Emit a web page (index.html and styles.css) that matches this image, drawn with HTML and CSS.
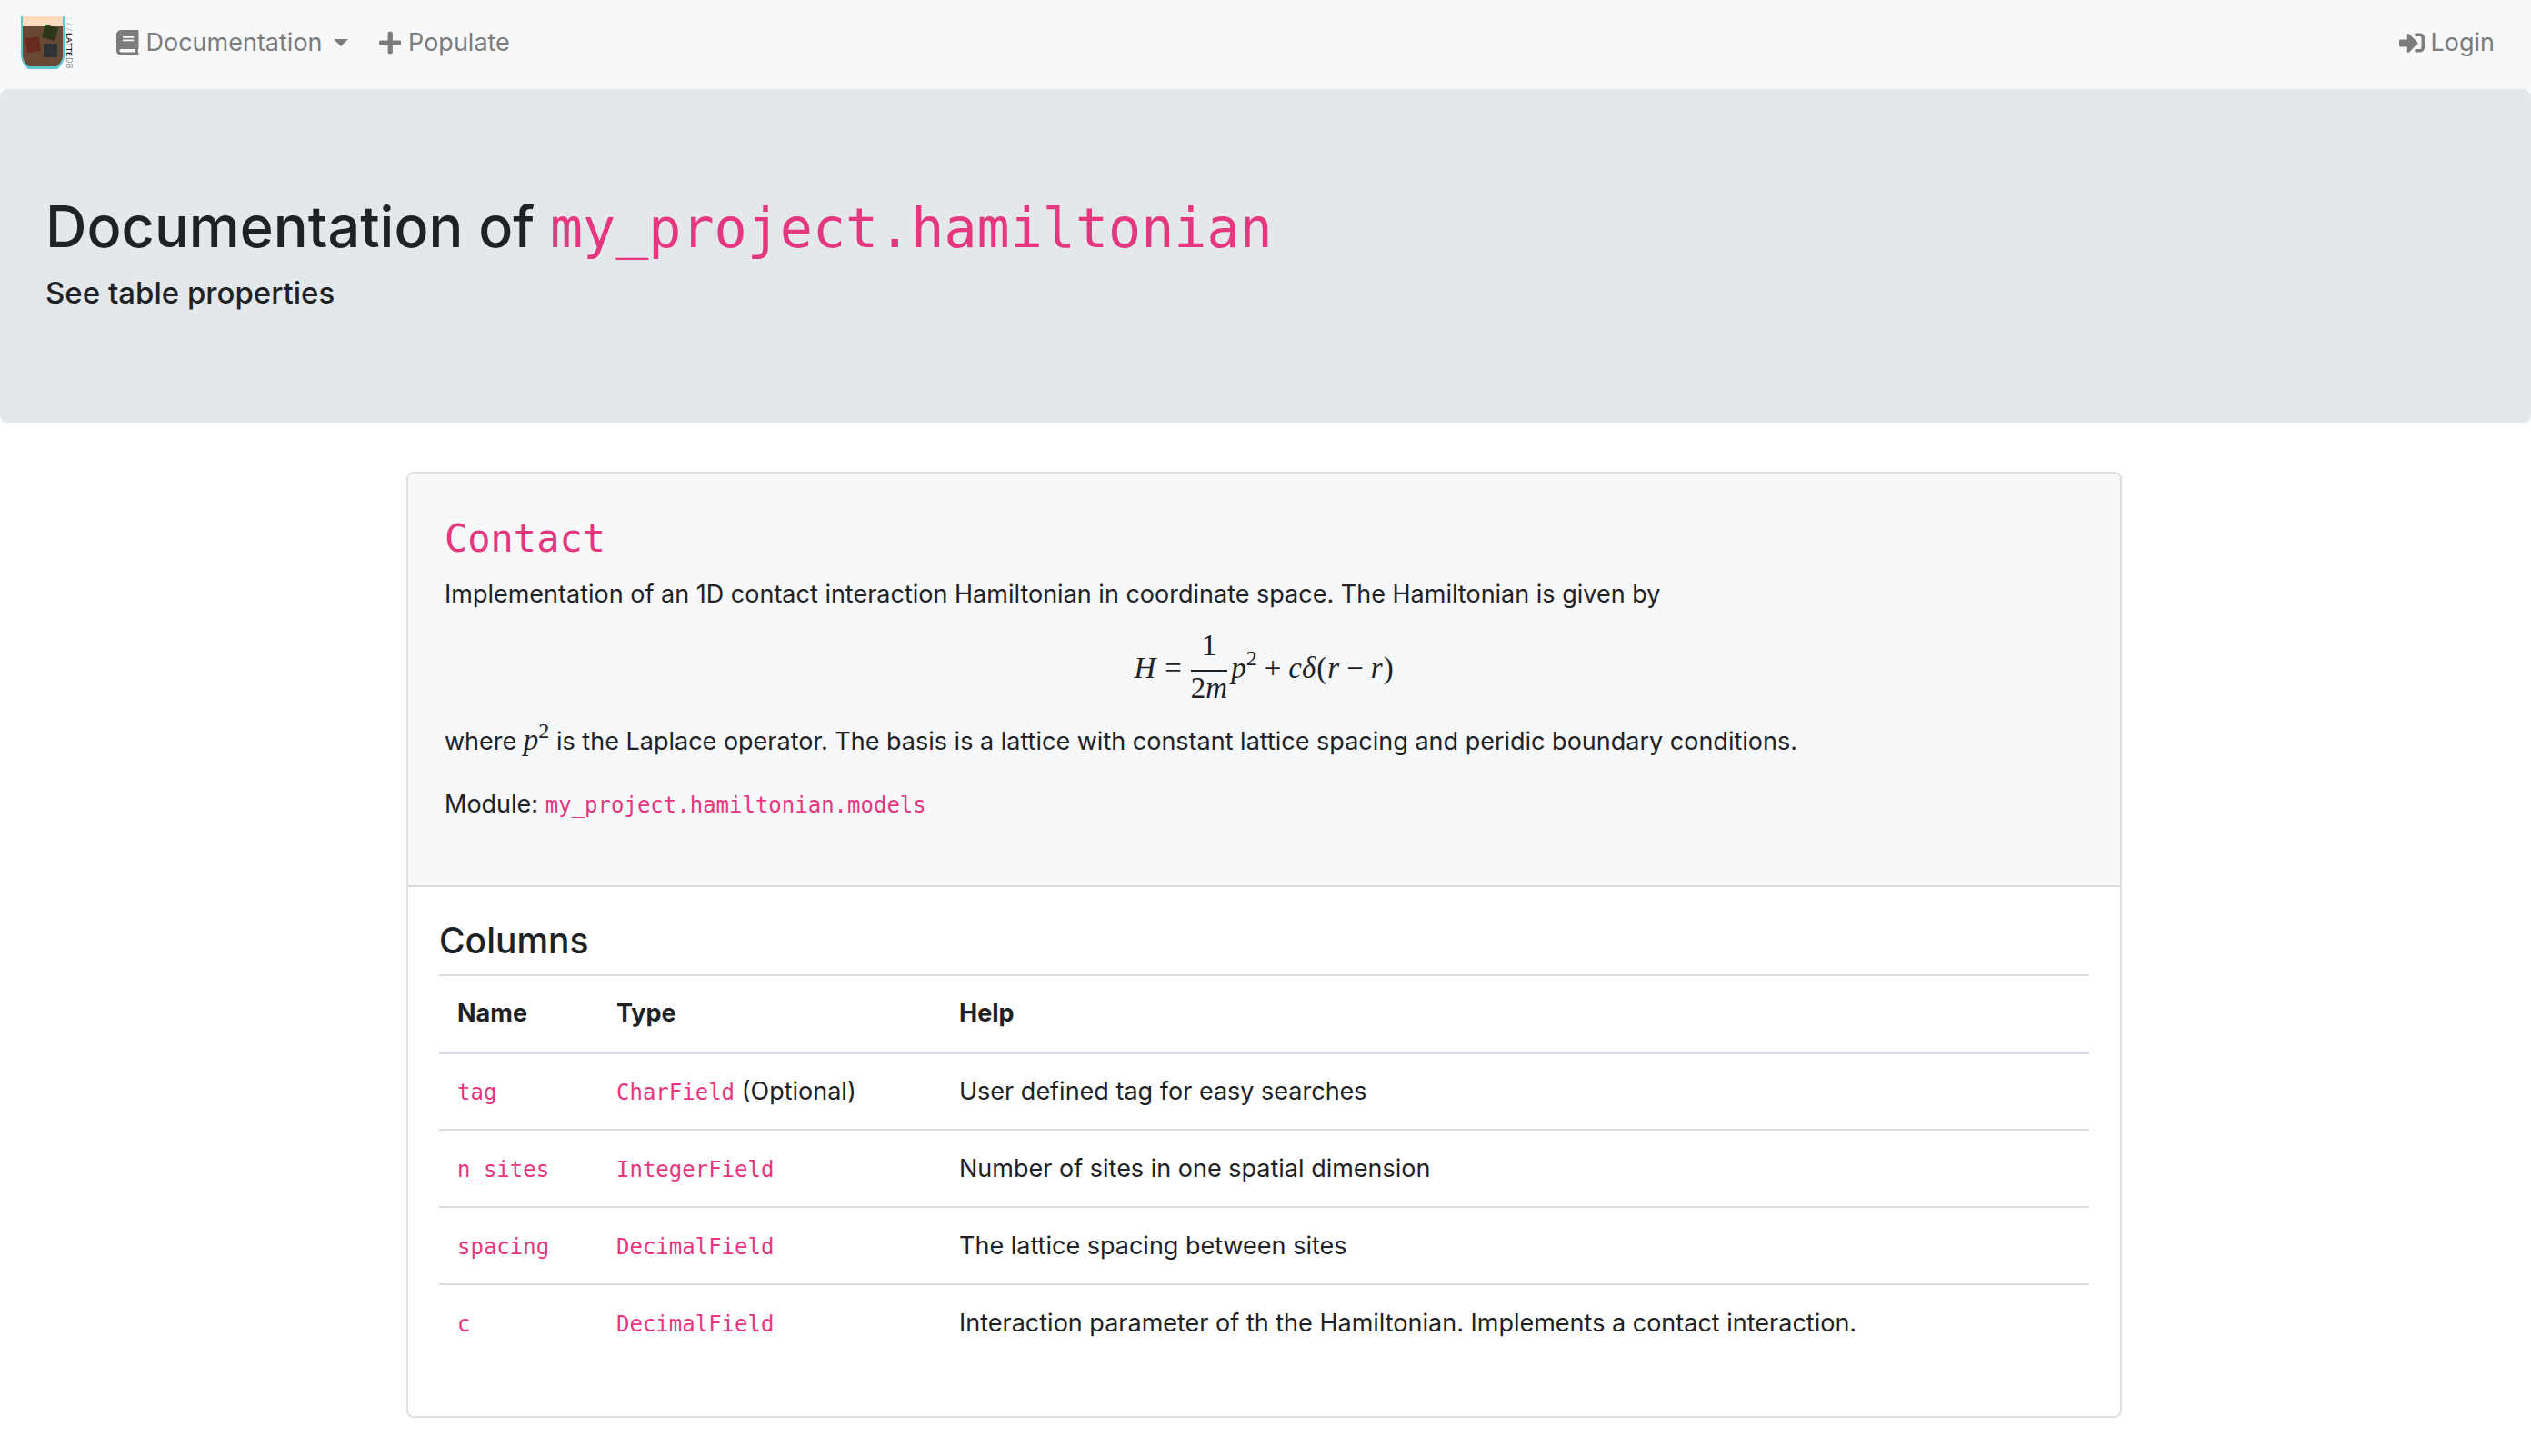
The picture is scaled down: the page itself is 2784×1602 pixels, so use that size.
FILE: index.html
```html
<!DOCTYPE html>
<html lang="en">
<head>
  <meta charset="utf-8">
  <meta name="viewport" content="width=device-width, initial-scale=1">
  <title>Documentation of my_project.hamiltonian</title>
  <link rel="stylesheet" href="styles.css">
</head>
<body>
  <nav class="navbar">
    <a class="brand" href="#" aria-label="LatteDB home">
      <svg class="brand-logo" viewBox="0 0 64 60" aria-hidden="true">
        <path fill="#ffdcc0" d="M1 1h46v12H1z"/>
        <path fill="#674936" d="M1 12h46v34q0 7-8 11H9q-8-4-8-11z"/>
        <path fill="#5cc5d0" d="M0 1h2v44q1 7 7 11h30q6-4 7-11V1h2v44q-1 8-8 14H8Q1 53 0 45z"/>
        <path fill="#2c3719" d="M27 10l14 4-4 14-14-4z"/>
        <path fill="#12a04c" d="M26 10l5 1-4 1z"/>
        <path fill="#672a20" d="M5 25l15-2 2 16-15 2z"/>
        <path fill="#2d3337" d="M25 31h15v15H25z"/>
        <g class="brand-text" transform="translate(50 0) rotate(90)">
          <text class="brand-slashes" x="2" y="0">:</text>
          <text class="brand-slashes" x="8" y="0">/</text>
          <text class="brand-slashes" x="14" y="0">/</text>
          <text class="brand-latte" x="19" y="0">LATTE</text>
          <text class="brand-db" x="46" y="0">DB</text>
        </g>
      </svg>
    </a>
    <ul class="nav-list">
      <li>
        <button class="nav-link" type="button" aria-haspopup="true">
          <svg class="icon icon-book" viewBox="0 0 448 512" aria-hidden="true"><path d="M448 360V24c0-13.3-10.7-24-24-24H96C43 0 0 43 0 96v320c0 53 43 96 96 96h328c13.3 0 24-10.7 24-24v-16c0-7.5-3.5-14.3-8.9-18.7-4.2-15.4-4.2-59.3 0-74.7 5.4-4.3 8.9-11.1 8.9-18.6zM128 134c0-3.3 2.7-6 6-6h212c3.3 0 6 2.7 6 6v20c0 3.3-2.7 6-6 6H134c-3.3 0-6-2.7-6-6v-20zm0 64c0-3.3 2.7-6 6-6h212c3.3 0 6 2.7 6 6v20c0 3.3-2.7 6-6 6H134c-3.3 0-6-2.7-6-6v-20zm253.4 250H96c-17.7 0-32-14.3-32-32 0-17.6 14.4-32 32-32h285.4c-1.9 17.1-1.9 46.9 0 64z"/></svg>
          <span>Documentation</span>
          <span class="caret"></span>
        </button>
      </li>
      <li>
        <a class="nav-link" href="#">
          <svg class="icon icon-plus" viewBox="0 0 448 512" aria-hidden="true"><path d="M416 208H272V64c0-17.67-14.33-32-32-32h-32c-17.67 0-32 14.33-32 32v144H32c-17.67 0-32 14.33-32 32v32c0 17.67 14.33 32 32 32h144v144c0 17.67 14.33 32 32 32h32c17.67 0 32-14.33 32-32V304h144c17.67 0 32-14.33 32-32v-32c0-17.67-14.33-32-32-32z"/></svg>
          <span>Populate</span>
        </a>
      </li>
    </ul>
    <a class="nav-link nav-login" href="#">
      <svg class="icon icon-login" viewBox="0 0 512 512" aria-hidden="true"><path d="M416 448h-84c-6.6 0-12-5.4-12-12v-40c0-6.6 5.4-12 12-12h84c17.7 0 32-14.3 32-32V160c0-17.7-14.3-32-32-32h-84c-6.6 0-12-5.4-12-12V76c0-6.6 5.4-12 12-12h84c53 0 96 43 96 96v192c0 53-43 96-96 96zm-47-201L201 79c-15-15-41-4.5-41 17v96H24c-13.3 0-24 10.7-24 24v96c0 13.3 10.7 24 24 24h136v96c0 21.5 26 32 41 17l168-168c9.3-9.4 9.3-24.6 0-34z"/></svg>
      <span>Login</span>
    </a>
  </nav>

  <header class="jumbotron">
    <h1>Documentation of <code>my_project.hamiltonian</code></h1>
    <p class="lead">See table properties</p>
  </header>

  <main class="container">
    <article class="card">
      <div class="card-header">
        <h2 class="model-name"><code>Contact</code></h2>
        <p class="intro">Implementation of an 1D contact interaction Hamiltonian in coordinate space. The Hamiltonian is given by</p>
        <div class="equation" role="math">
          <i>H</i><span class="relation">=</span><span class="fraction"><span class="numerator">1</span><span class="denominator">2<i>m</i></span></span><i>p</i><sup>2</sup><span class="operator">+</span><i>c</i><i>δ</i><span class="paren">(</span><i>r</i><span class="operator">−</span><i>r</i><span class="paren">)</span>
        </div>
        <p>where <span class="math"><i>p</i><sup>2</sup></span> is the Laplace operator. The basis is a lattice with constant lattice spacing and peridic boundary conditions.</p>
        <p>Module: <code>my_project.hamiltonian.models</code></p>
      </div>
      <div class="card-body">
        <h3>Columns</h3>
        <table class="columns">
          <colgroup><col class="col-name"><col class="col-type"><col></colgroup>
          <thead>
            <tr><th scope="col">Name</th><th scope="col">Type</th><th scope="col">Help</th></tr>
          </thead>
          <tbody>
            <tr><td><code>tag</code></td><td><code>CharField</code> (Optional)</td><td>User defined tag for easy searches</td></tr>
            <tr><td><code>n_sites</code></td><td><code>IntegerField</code></td><td>Number of sites in one spatial dimension</td></tr>
            <tr><td><code>spacing</code></td><td><code>DecimalField</code></td><td>The lattice spacing between sites</td></tr>
            <tr><td><code>c</code></td><td><code>DecimalField</code></td><td>Interaction parameter of th the Hamiltonian. Implements a contact interaction.</td></tr>
          </tbody>
        </table>
      </div>
    </article>
  </main>
</body>
</html>
```
FILE: styles.css
```css
* {
  box-sizing: border-box;
}

body {
  margin: 0;
  background: #fff;
  color: #1e2225;
  font-family: Inter, "Liberation Sans", sans-serif;
  font-size: 27px;
  line-height: 42px;
}

h1,
h2,
h3,
p {
  margin: 0;
}

code {
  color: #e5377f;
  font-family: "DejaVu Sans Mono", monospace;
  font-size: 24px;
  font-weight: 400;
  line-height: 1;
}

/* Navigation */
.navbar {
  display: flex;
  align-items: center;
  height: 98px;
  padding: 0 40px 4px 23px;
  background: #f7f8fa;
}

.brand {
  display: flex;
  margin-right: 41px;
}

.brand-logo {
  width: 64px;
  height: 60px;
  overflow: visible;
}

.brand-text {
  font-family: "Open Sans", sans-serif;
  font-size: 9px;
}

.brand-slashes {
  fill: #a9a9a9;
}

.brand-latte {
  fill: #222;
  font-weight: 600;
}

.brand-db {
  fill: #888;
}

.nav-list {
  display: flex;
  gap: 34px;
  margin: 0;
  padding: 0;
  list-style: none;
}

.nav-link {
  display: flex;
  align-items: center;
  gap: 8px;
  padding: 0;
  border: 0;
  background: none;
  color: #7c7c7d;
  font: inherit;
  text-decoration: none;
}

.nav-login {
  gap: 6px;
  margin-left: auto;
}

.icon {
  height: 28px;
  fill: currentColor;
}

.caret {
  margin-left: 4px;
  border-top: 8px solid;
  border-right: 8px solid transparent;
  border-left: 8px solid transparent;
}

/* Page heading */
.jumbotron {
  padding: 110px 50px 122px;
  border-radius: 8px;
  background: #e4e8eb;
}

.jumbotron h1 {
  font-size: 63px;
  font-weight: 500;
  line-height: 82px;
}

.jumbotron h1 code {
  font-size: 60px;
}

.lead {
  margin-top: 12px;
  font-size: 33px;
  font-weight: 500;
  line-height: 41px;
}

/* Model card */
.container {
  max-width: 1954px;
  margin: 54px auto 42px;
  padding: 0 35px 0 32px;
}

.card {
  border: 2px solid #dfdfdf;
  border-radius: 8px;
}

.card-header {
  padding: 44px 40px 68px;
  border-bottom: 2px solid #d8dadc;
  border-radius: 6px 6px 0 0;
  background: #f7f8fa;
}

.card-header p + p {
  margin-top: 27px;
}

.model-name {
  line-height: 56px;
}

.model-name code {
  font-size: 42px;
}

.intro {
  margin-top: 12px;
}

.equation,
.math {
  font-family: "Liberation Serif", serif;
  font-size: 33px;
}

.math {
  line-height: 1;
}

.equation sup,
.math sup {
  font-size: 24px;
  line-height: 24px;
}

.math sup {
  line-height: 0;
  vertical-align: 13px;
}

.equation {
  display: flex;
  align-items: center;
  justify-content: center;
  height: 120px;
}

.equation sup {
  padding-bottom: 22px;
}

.relation {
  margin: 0 10px;
}

.operator {
  margin: 0 8px;
}

.paren {
  margin: 0 1px;
}

.fraction {
  display: flex;
  flex-direction: column;
  margin-right: 4px;
  line-height: 36px;
  text-align: center;
}

.numerator {
  padding-bottom: 9px;
  border-bottom: 2px solid;
}

.denominator {
  padding-bottom: 3px;
}

.card-body {
  padding: 34px 34px 60px;
}

.card-body h3 {
  margin-bottom: 12px;
  font-size: 39px;
  font-weight: 500;
  line-height: 50px;
}

.columns {
  width: 100%;
  border-collapse: collapse;
  table-layout: fixed;
}

.col-name {
  width: 175px;
}

.col-type {
  width: 377px;
}

.columns th,
.columns td {
  height: 85px;
  padding: 0 20px;
  border-top: 2px solid #d9dde1;
  text-align: left;
}

.columns th {
  border-bottom: 3px solid #d9dde1;
  font-weight: 700;
}
```
